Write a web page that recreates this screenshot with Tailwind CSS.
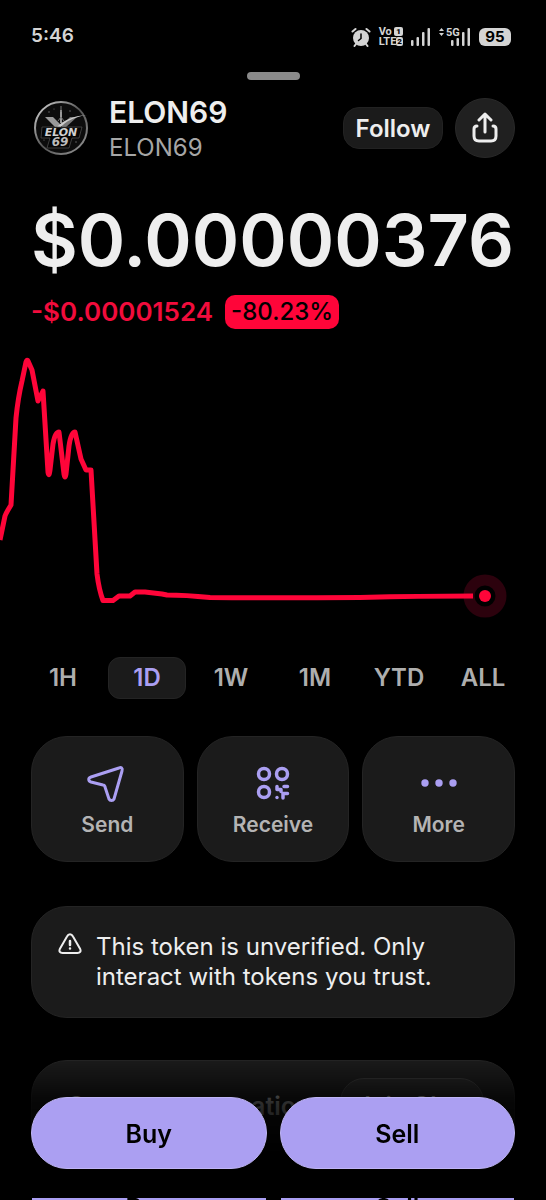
<!DOCTYPE html>
<html lang="en">
<head>
    <meta charset="UTF-8">
    <meta name="viewport" content="width=device-width, initial-scale=1.0">
    <title>ELON69</title>
    <script src="https://cdn.jsdelivr.net/npm/@tailwindcss/browser@4"></script>
</head>
<body class="bg-black font-['Inter',sans-serif] text-[#eeeeee]">
    <div class="h-screen overflow-hidden">
        <!-- status bar -->
        <div class="flex h-[72px] items-center justify-between px-[31px] pt-px text-[#d4d4d4]">
            <span class="text-[19px] font-semibold">5:46</span>
            <div class="flex items-center gap-2">
                <svg class="h-5 w-5" viewBox="0 0 20 20" fill="none" stroke="currentColor" stroke-width="2" stroke-linecap="round">
                    <circle cx="10" cy="11" r="8" fill="currentColor" stroke="none" />
                    <path d="M1.5 4.5 4.5 2M18.5 4.5 15.5 2M5 17l-1.5 2M15 17l1.5 2" />
                    <path d="M10 7v4.5l-2.500 2" stroke="#000" stroke-width="1.500" />
                </svg>
                <div class="flex flex-col font-['Roboto',sans-serif] text-[11px] font-bold leading-[10px]">
                    <span class="flex justify-between">Vo <b class="h-[9px] rounded-xs bg-[#d4d4d4] px-[2px] text-[8px] leading-[9px] text-black">1</b></span>
                    <span class="flex">LTE<b class="h-[9px] rounded-xs bg-[#d4d4d4] px-px text-[8px] leading-[9px] text-black">2</b></span>
                </div>
                <svg class="h-5 w-5" viewBox="0 0 20 20" fill="currentColor">
                    <rect x="0" y="13" width="2.500" height="6" rx="1" />
                    <rect x="5.500" y="10" width="2.500" height="9" rx="1" />
                    <rect x="11" y="5" width="2.500" height="14" rx="1" />
                    <rect x="16.500" y="1" width="2.500" height="18" rx="1" />
                </svg>
                <svg class="h-5 w-8" viewBox="0 0 32 20" fill="currentColor">
                    <path d="M0 4 2.500 1 5 4zM0 6h5L2.500 9z" />
                    <text x="7" y="9" font-family="Roboto, sans-serif" font-size="11" font-weight="700">5G</text>
                    <rect x="12" y="13" width="2.500" height="6" rx="1" />
                    <rect x="17.500" y="11" width="2.500" height="8" rx="1" />
                    <rect x="23" y="5" width="2.500" height="14" rx="1" />
                    <rect x="28.500" y="1" width="2.500" height="18" rx="1" />
                </svg>
                <span class="mr-1 h-[18px] w-8 rounded-md bg-[#d4d4d4] text-center text-[15px] font-bold leading-[18px] text-black">95</span>
            </div>
        </div>
        <div class="mx-auto h-2 w-[53px] rounded-full bg-[#8a8a8a]"></div>

        <!-- token header -->
        <header class="mt-3 flex h-[72px] items-center px-[31px]">
            <svg class="h-[60px] w-[60px] shrink-0" viewBox="0 0 60 60" fill="none">
                <defs>
                    <linearGradient id="ring" x1="0" y1="0" x2="1" y2="1">
                        <stop offset="0" stop-color="#dddddd" />
                        <stop offset=".5" stop-color="#555555" />
                        <stop offset="1" stop-color="#999999" />
                    </linearGradient>
                </defs>
                <circle cx="30" cy="30" r="26" fill="#0c0c0c" stroke="url(#ring)" stroke-width="2" />
                <path d="M30 12v13" stroke="#999" stroke-width="2" />
                <path d="M30 8v6M27 23l3-4 3 4" stroke="#777" />
                <path d="M14 19h8l8 8-1 3h-4z" fill="#999" />
                <path d="M46 19h-7l-8 8v3h3z" fill="#777" />
                <path d="M25 30c7-8 17-12 31-13-13 2-21 6-27 13z" fill="#ccc" />
                <path d="M11 29h40l-3 11h-7l-3 10H16l3-10h-9z" fill="#050505" stroke="#555" stroke-width=".7" />
                <text x="30" y="38" fill="#d0d0d0" font-family="DejaVu Sans, sans-serif" font-size="11" font-weight="700" font-style="italic" text-anchor="middle">ELON</text>
                <text x="29" y="48" fill="#bcbcbc" font-family="DejaVu Sans, sans-serif" font-size="12" font-weight="700" font-style="italic" text-anchor="middle">69</text>
                <g fill="#777"><circle cx="18" cy="14" r=".7" /><circle cx="23" cy="11" r=".5" /><circle cx="39" cy="13" r=".7" /><circle cx="45" cy="44" r=".7" /><circle cx="13" cy="42" r=".6" /></g>
            </svg>
            <div class="ml-[18px] flex-1 pt-[3px]">
                <h1 class="text-[30px] font-semibold leading-9">ELON69</h1>
                <p class="text-2xl leading-9 text-[#a6a6a6]">ELON69</p>
            </div>
            <button type="button" class="h-[42px] w-[100px] rounded-2xl border border-[#222222] bg-[#1b1b1b] pt-[2px] text-2xl font-semibold leading-8">Follow</button>
            <button type="button" aria-label="Share" class="ml-3 flex h-[60px] w-[60px] items-center justify-center rounded-full border border-[#292929] bg-[#202020]">
                <svg class="h-8 w-7" viewBox="0 0 28 32" fill="none" stroke="currentColor" stroke-width="3" stroke-linecap="round" stroke-linejoin="round">
                    <path d="M14 20V2M8 8l6-6 6 6M6 14c-2 0-3 1-3 3v7c0 4 2 5 5 5h12c3 0 5-1 5-5v-7c0-2-1-3-3-3" />
                </svg>
            </button>
        </header>

        <!-- price -->
        <div class="mt-[30px] px-[31px]">
            <div class="text-[72px] font-semibold leading-[92px]">$0.00000376</div>
            <div class="mt-[9px] flex items-center gap-3 font-semibold leading-[34px]">
                <span class="text-[26px] text-[#f20c3c]">-$0.00001524</span>
                <span class="rounded-[10px] bg-[#ff0539] px-[6px] text-2xl font-medium leading-[34px] text-black">-80.23%</span>
            </div>
        </div>

        <!-- chart -->
        <svg class="mt-4 block w-full" viewBox="0 345 546 280" fill="none">
            <circle cx="485" cy="596" r="16" stroke="#2c020d" stroke-width="11" />
            <path d="M0 540 5 516Q6 513 11 505L16 418Q18 398 22 381L26 362Q27 359 28 361L32 370 38 401 43 391 48 472Q49 478 50 470L53 444Q55 432 59 432L64 474Q65 480 66 474L69 446Q71 432 75 432L81 459 86 470 91 470 97 574Q99 590 103 600.500H113L119 596H130L135 592H145L162 594 167 595Q185 595 210 597.500 270 598 360 597.500 420 596 473 596" stroke="#ff0539" stroke-width="5" stroke-linejoin="round" />
            <circle cx="485" cy="596" r="6" fill="#ff0539" />
        </svg>

        <!-- time range -->
        <div class="mt-8 grid grid-cols-6 gap-[6px] px-6 text-2xl font-semibold text-[#aeaeae]">
            <button type="button" class="h-[42px]">1H</button>
            <button type="button" class="h-[42px] rounded-xl border border-[#242424] bg-[#1b1b1b] text-[#ab9ff2]">1D</button>
            <button type="button" class="h-[42px]">1W</button>
            <button type="button" class="h-[42px]">1M</button>
            <button type="button" class="h-[42px]">YTD</button>
            <button type="button" class="h-[42px]">ALL</button>
        </div>

        <!-- actions -->
        <div class="mt-[37px] grid grid-cols-3 gap-[13px] px-[31px] text-[21px] font-semibold leading-7 text-[#b4b4b4]">
            <button type="button" class="flex h-[126px] flex-col items-center justify-center gap-2 rounded-[36px] border border-[#242424] bg-[#1b1b1b] pt-1">
                <svg class="h-10 w-10" viewBox="0 0 40 40" fill="none" stroke="#ab9ff2" stroke-width="3" stroke-linejoin="round">
                    <path d="M32 5 4 14c-3 1-3 4 0 5l12 3c1 0 2 1 2 2l4 12c1 2 4 2 5 0L35 8c1-3-1-4-3-3z" />
                </svg>
                Send
            </button>
            <button type="button" class="flex h-[126px] flex-col items-center justify-center gap-2 rounded-[36px] border border-[#242424] bg-[#1b1b1b] pt-1">
                <svg class="h-10 w-10" viewBox="0 0 40 40" fill="none" stroke="#ab9ff2" stroke-width="3.500">
                    <circle cx="11" cy="11" r="5.500" />
                    <circle cx="29" cy="11" r="5.500" />
                    <circle cx="11" cy="29" r="5.500" />
                    <path d="M24 23.500v3h4v2M31 23.500h3.500M34.500 30.500h-4.500v4.500" stroke-linecap="round" stroke-linejoin="round" />
                    <circle cx="24" cy="34.500" r="1.700" fill="#ab9ff2" stroke="none" />
                </svg>
                Receive
            </button>
            <button type="button" class="flex h-[126px] flex-col items-center justify-center gap-2 rounded-[36px] border border-[#242424] bg-[#1b1b1b] pt-1">
                <svg class="h-10 w-10" viewBox="0 0 40 40" fill="#ab9ff2">
                    <circle cx="6" cy="20" r="3.700" />
                    <circle cx="20" cy="20" r="3.700" />
                    <circle cx="34" cy="20" r="3.700" />
                </svg>
                More
            </button>
        </div>

        <!-- warning -->
        <div class="mx-[31px] mt-11 flex gap-[14px] rounded-[36px] border border-[#242424] bg-[#1b1b1b] px-[26px] py-[25px]">
            <svg class="h-6 w-6 shrink-0" viewBox="0 0 24 24" fill="none" stroke="currentColor" stroke-width="2" stroke-linecap="round" stroke-linejoin="round">
                <path d="M9 4.500 1.800 17c-1 2.500.2 4 2.700 4h15c2.500 0 3.700-1.500 2.700-4L15 4.500C13.500 1.500 10.500 1.500 9 4.500z" />
                <path d="M12 9v4M12 16.500v.1" stroke-width="2.500" />
            </svg>
            <p class="text-2xl leading-[30px]">This token is unverified. Only interact with tokens you trust.</p>
        </div>

        <!-- chat card -->
        <div class="mx-[31px] mt-[42px] flex h-40 items-start justify-between rounded-[36px] border border-[#242424] bg-[#1b1b1b] px-[30px] pt-[17px] text-2xl font-semibold text-[#b4b4b4]">
            <span class="whitespace-nowrap pl-[6px] text-[25px] leading-[56px]">Start a conversation</span>
            <button type="button" class="h-14 w-[144px] shrink-0 rounded-3xl border border-[#333333] bg-[#242424]">Join Chat</button>
        </div>
    </div>

    <!-- buy / sell bar -->
    <footer class="fixed inset-x-0 bottom-0 bg-linear-to-b from-transparent from-0% via-black/75 via-30% to-black to-70% pt-[37px]">
        <div class="grid grid-cols-2 gap-[13px] px-[31px] text-[25px] font-semibold leading-8 text-black">
            <button type="button" class="h-[72px] rounded-full border border-[#bfb5f6] bg-[#ab9ff2] pt-[2px]">Buy</button>
            <button type="button" class="h-[72px] rounded-full border border-[#bfb5f6] bg-[#ab9ff2] pt-[2px]">Sell</button>
        </div>
        <div class="mt-[29px] grid h-[2px] grid-cols-2 gap-[15px] overflow-hidden px-8 text-center text-[25px] font-semibold leading-5 text-black">
            <div class="bg-[#ab9ff2]">Buy</div>
            <div class="bg-[#ab9ff2]">Sell</div>
        </div>
    </footer>
</body>
</html>
